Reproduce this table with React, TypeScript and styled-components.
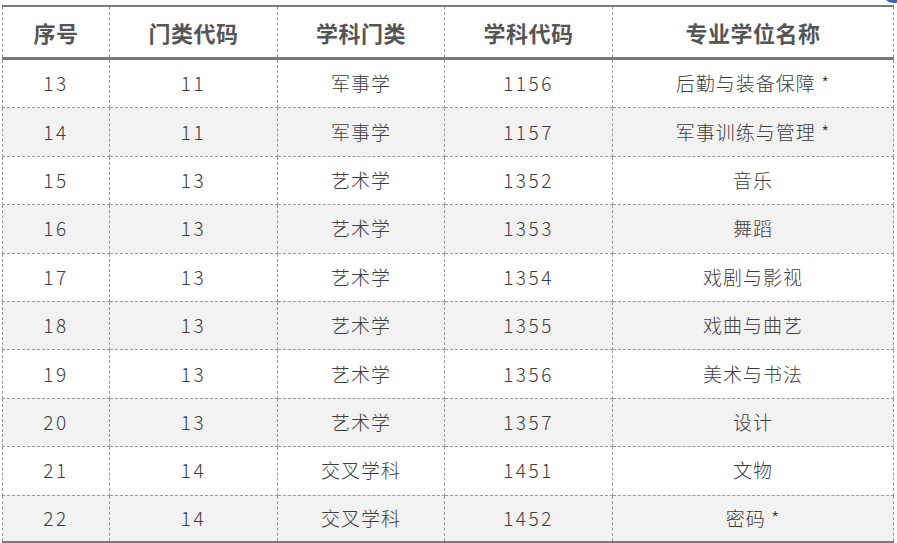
import React from 'react';
import styled, { createGlobalStyle } from 'styled-components';

interface Row {
  no: number;
  category: number;
  discipline: string;
  code: number;
  name: string;
}

const rows: Row[] = [
  { no: 13, category: 11, discipline: '军事学', code: 1156, name: '后勤与装备保障 *' },
  { no: 14, category: 11, discipline: '军事学', code: 1157, name: '军事训练与管理 *' },
  { no: 15, category: 13, discipline: '艺术学', code: 1352, name: '音乐' },
  { no: 16, category: 13, discipline: '艺术学', code: 1353, name: '舞蹈' },
  { no: 17, category: 13, discipline: '艺术学', code: 1354, name: '戏剧与影视' },
  { no: 18, category: 13, discipline: '艺术学', code: 1355, name: '戏曲与曲艺' },
  { no: 19, category: 13, discipline: '艺术学', code: 1356, name: '美术与书法' },
  { no: 20, category: 13, discipline: '艺术学', code: 1357, name: '设计' },
  { no: 21, category: 14, discipline: '交叉学科', code: 1451, name: '文物' },
  { no: 22, category: 14, discipline: '交叉学科', code: 1452, name: '密码 *' },
];

const columns = [
  { title: '序号', width: 107 },
  { title: '门类代码', width: 168 },
  { title: '学科门类', width: 167 },
  { title: '学科代码', width: 168 },
  { title: '专业学位名称', width: 281 },
];

const GlobalStyle = createGlobalStyle`
  html, body {
    margin: 0;
    padding: 0;
    background: #ffffff;
    font-family: "Noto Sans CJK SC", "Noto Sans", sans-serif;
  }
`;

const Page = styled.div`
  padding: 5px 0 0 2px;
  width: 897px;
  height: 543px;
  box-sizing: border-box;
  overflow: hidden;
  position: relative;
`;

const Table = styled.table`
  width: 891px;
  border-collapse: collapse;
  table-layout: fixed;
  border-top: 2px solid #7a7a7a;
  border-bottom: 2px solid #7a7a7a;
`;

const HeadCell = styled.th`
  height: 50px;
  padding: 0;
  border-left: 1px dashed #9a9a9a;
  border-right: 1px dashed #9a9a9a;
  border-bottom: 3px solid #7a7a7a;
  font-size: 22px;
  font-weight: 700;
  line-height: 1.2;
  color: #555555;
  text-align: center;
  vertical-align: middle;
  letter-spacing: 0.5px;
`;

const BodyRow = styled.tr<{ $striped: boolean }>`
  background: ${({ $striped }) => ($striped ? '#f2f2f2' : '#ffffff')};

  &:last-child td {
    height: 45.5px;
  }
`;

const Cell = styled.td<{ $numeric?: boolean }>`
  height: 47.4px;
  padding: 0;
  border: 1px dashed #9a9a9a;
  font-size: 19px;
  font-weight: 300;
  line-height: 1.2;
  color: #3d3d3d;
  text-align: center;
  vertical-align: middle;
  letter-spacing: ${({ $numeric }) => ($numeric ? '2.5px' : '1px')};
`;

const CornerMark = styled.div`
  position: absolute;
  top: -9px;
  right: -6px;
  width: 18px;
  height: 12px;
  border-radius: 50%;
  background: #3b64b8;
`;

const App: React.FC = () => (
  <Page>
    <GlobalStyle />
    <CornerMark />
    <Table>
      <colgroup>
        {columns.map((c) => (
          <col key={c.title} style={{ width: c.width }} />
        ))}
      </colgroup>
      <thead>
        <tr>
          {columns.map((c) => (
            <HeadCell key={c.title}>{c.title}</HeadCell>
          ))}
        </tr>
      </thead>
      <tbody>
        {rows.map((r, i) => (
          <BodyRow key={r.no} $striped={i % 2 === 1}>
            <Cell $numeric>{r.no}</Cell>
            <Cell $numeric>{r.category}</Cell>
            <Cell>{r.discipline}</Cell>
            <Cell $numeric>{r.code}</Cell>
            <Cell>{r.name}</Cell>
          </BodyRow>
        ))}
      </tbody>
    </Table>
  </Page>
);

export default App;
